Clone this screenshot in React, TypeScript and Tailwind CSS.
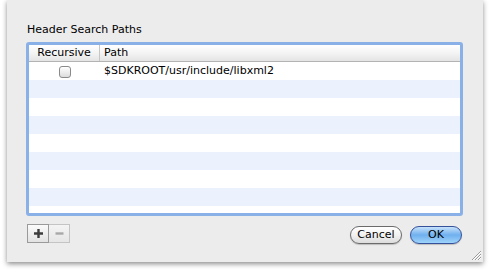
const rows = Array.from({ length: 8 });

const Checkbox = () => (
  <div className="w-[12px] h-[12px] rounded-[3px] border border-[#8a8a8a] bg-gradient-to-b from-[#ffffff] to-[#dcdcdc] shadow-[inset_0_1px_0_rgba(255,255,255,0.9)]" />
);

const Grip = () => (
  <svg width="11" height="11" viewBox="0 0 11 11" className="absolute right-[1px] bottom-[1px]">
    <path d="M1 10 L10 1 M4 10 L10 4 M7 10 L10 7" stroke="#9a9a9a" strokeWidth="1" />
    <path d="M2 10 L10 2 M5 10 L10 5 M8 10 L10 8" stroke="#ffffff" strokeWidth="1" />
  </svg>
);

const App = () => {
  return (
    <div className="w-[490px] h-[272px] bg-white font-['DejaVu_Sans',sans-serif] text-black">
      <div className="relative ml-[7px] w-[476px] h-[262px] bg-[#ececec] shadow-[0_2px_5px_rgba(0,0,0,0.45)] flex flex-col px-[19px] pt-[23px]">
        <div className="text-[11px] leading-[14px] pl-[1px]">Header Search Paths</div>

        <div className="mt-[5px] w-[437px] h-[174px] rounded-[3px] border-[3px] border-[#89b1e8] bg-white flex flex-col overflow-hidden">
          <div className="flex h-[17px] border-b border-[#b3b3b3] bg-gradient-to-b from-[#ffffff] via-[#f4f4f4] to-[#e4e4e4] text-[11px] leading-[16px] shrink-0">
            <div className="w-[71px] text-center border-r border-[#c6c6c6]">Recursive</div>
            <div className="pl-[4px]">Path</div>
          </div>
          {rows.map((_, i) => (
            <div
              key={i}
              className={`flex h-[18px] shrink-0 items-center text-[11px] ${i % 2 === 1 ? "bg-[#ecf2fd]" : "bg-white"}`}
            >
              {i === 0 && (
                <>
                  <div className="w-[71px] flex justify-center pt-[1px]">
                    <Checkbox />
                  </div>
                  <div className="pl-[4px] leading-[18px]">$SDKROOT/usr/include/libxml2</div>
                </>
              )}
            </div>
          ))}
        </div>

        <div className="flex justify-between items-start mt-[8px] pl-[1px] pr-[2px]">
          <div className="flex h-[19px]">
            <div className="w-[22px] h-[19px] border border-[#9a9a9a] bg-gradient-to-b from-[#fbfbfb] to-[#e2e2e2] flex items-center justify-center">
              <svg width="11" height="11" viewBox="0 0 11 11">
                <path d="M5.5 1 V10 M1 5.5 H10" stroke="#3c3c3c" strokeWidth="2.4" />
              </svg>
            </div>
            <div className="w-[21px] h-[19px] border border-l-0 border-[#c4c4c4] bg-gradient-to-b from-[#f4f4f4] to-[#e6e6e6] flex items-center justify-center">
              <svg width="9" height="11" viewBox="0 0 9 11">
                <path d="M0.5 5.5 H8.5" stroke="#a8a8a8" strokeWidth="2.4" />
              </svg>
            </div>
          </div>

          <div className="flex gap-[8px] mt-[2px]">
            <div className="w-[52px] h-[18px] rounded-full border border-[#6b6b6b] bg-gradient-to-b from-[#ffffff] via-[#f2f2f2] to-[#dcdcdc] text-[11px] leading-[16px] text-center shadow-[0_1px_1px_rgba(0,0,0,0.2)]">
              Cancel
            </div>
            <div className="w-[52px] h-[18px] rounded-full border border-[#35519a] bg-gradient-to-b from-[#c6e1fb] via-[#6fb0ee] to-[#9ed4fb] text-[11px] leading-[16px] text-center shadow-[0_1px_1px_rgba(0,0,0,0.2)]">
              OK
            </div>
          </div>
        </div>

        <Grip />
      </div>
    </div>
  );
};

export default App;
